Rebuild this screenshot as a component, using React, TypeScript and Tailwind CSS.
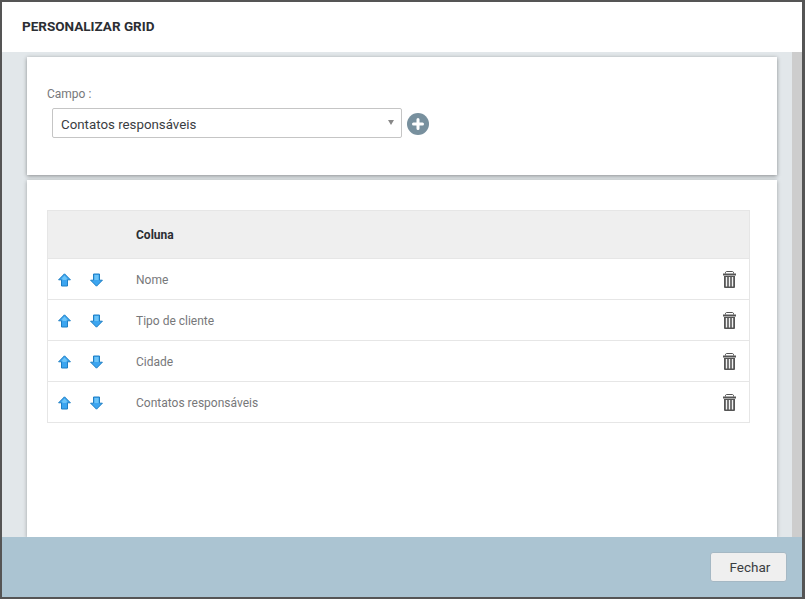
const font = { fontFamily: "Roboto, 'Liberation Sans', sans-serif" };

function ArrowUp() {
  return (
    <svg width="13" height="14" viewBox="0 0 13 14" className="block">
      <path d="M6.500 .8 12.400 6.800H9.500V13H3.500V6.800H.6Z" fill="#3ca5f0" stroke="#1f7fc4" strokeWidth="1" strokeLinejoin="round" />
      <path d="M6.500 2.400 9.600 5.800H8.500V7H4.500V5.800H3.400Z" fill="#6cc4f8" />
    </svg>
  );
}

function ArrowDown() {
  return (
    <svg width="13" height="14" viewBox="0 0 13 14" className="block">
      <path d="M6.500 13.200 12.400 7.200H9.500V1H3.500V7.200H.6Z" fill="#3ca5f0" stroke="#1f7fc4" strokeWidth="1" strokeLinejoin="round" />
      <path d="M4.500 2H8.500V7H4.500Z" fill="#6cc4f8" />
    </svg>
  );
}

function Trash() {
  return (
    <svg width="13" height="17" viewBox="0 0 13 17" className="block">
      <path d="M2.500 2.500V1.200L3.300 .5H9.700L10.500 1.200V2.500" fill="none" stroke="#555" strokeWidth="1" />
      <rect x="0" y="2.500" width="13" height="2" fill="#555" />
      <path d="M1 5H12V16a1 1 0 0 1-1 1H2a1 1 0 0 1-1-1Z" fill="#555" />
      <rect x="2.800" y="6" width="1.400" height="9.500" fill="#f2f2f2" />
      <rect x="5.800" y="6" width="1.400" height="9.500" fill="#f2f2f2" />
      <rect x="8.800" y="6" width="1.400" height="9.500" fill="#f2f2f2" />
    </svg>
  );
}

function Row({ label }: { label: string }) {
  return (
    <div className="flex h-[41px] items-center border-t border-[#e6e6e6] pt-px">
      <div className="mt-px flex w-[88px] items-center gap-[19px] pl-[10px]">
        <ArrowUp />
        <ArrowDown />
      </div>
      <span className="flex-1 text-[12px] text-[#77787a]">{label}</span>
      <div className="pr-[13px]">
        <Trash />
      </div>
    </div>
  );
}

export default function App() {
  return (
    <div className="h-[599px] w-[805px] overflow-hidden bg-[#555555] p-[2px]" style={font}>
      <div className="flex h-[595px] w-[800px] flex-col">
        <div className="flex h-[50px] shrink-0 items-center bg-white pb-[1px] pl-[20px]">
          <h1 className="text-[13.5px] font-bold text-[#2b2e33]">PERSONALIZAR GRID</h1>
        </div>

        <div className="flex min-h-0 flex-1">
          <div className="flex flex-1 flex-col gap-[5px] bg-[#e2e7ea] pl-[25px] pr-[15px] pt-[5px]">
            <div className="h-[118px] shrink-0 bg-white pl-[20px] pt-[30px] shadow-[0_1px_4px_rgba(0,0,0,0.4)]">
              <div className="text-[12px] leading-[14px] text-[#77787a]">Campo :</div>
              <div className="mt-[7px] flex items-center gap-[5px] pl-[5px]">
                <div className="relative flex h-[30px] w-[350px] items-center rounded-[2px] border border-[#c5c5c5] pl-[8px] pt-[3px] text-[13.3px] text-[#3a3d42]">
                  Contatos responsáveis
                  <span className="absolute right-[7px] top-[11px] h-0 w-0 border-x-[3px] border-t-[5px] border-x-transparent border-t-[#888888]" />
                </div>
                <svg width="22" height="22" viewBox="0 0 22 22" className="mt-[2px]">
                  <circle cx="11" cy="11" r="11" fill="#78909e" />
                  <path d="M11 6.500v9M6.500 11h9" stroke="#fff" strokeWidth="3" strokeLinecap="round" />
                </svg>
              </div>
            </div>

            <div className="min-h-0 flex-1 bg-white px-[20px] pt-[30px] shadow-[0_1px_4px_rgba(0,0,0,0.3)]">
              <div className="w-[703px] border border-[#e6e6e6]">
                <div className="flex h-[47px] items-center bg-[#efefef] pl-[88px] text-[12px] font-bold text-[#2b2e33]">
                  Coluna
                </div>
                <Row label="Nome" />
                <Row label="Tipo de cliente" />
                <Row label="Cidade" />
                <Row label="Contatos responsáveis" />
              </div>
            </div>
          </div>
          <div className="w-[10px] shrink-0 bg-[#cdcdcd]" />
        </div>

        <div className="flex h-[60px] shrink-0 items-center justify-end bg-[#abc4d2] pr-[15px]">
          <button className="h-[30px] w-[77px] rounded-[3px] border border-[#a5b8c4] bg-[#efefef] pl-[3px] text-[13.5px] text-[#3a3d42]">
            Fechar
          </button>
        </div>
      </div>
    </div>
  );
}
